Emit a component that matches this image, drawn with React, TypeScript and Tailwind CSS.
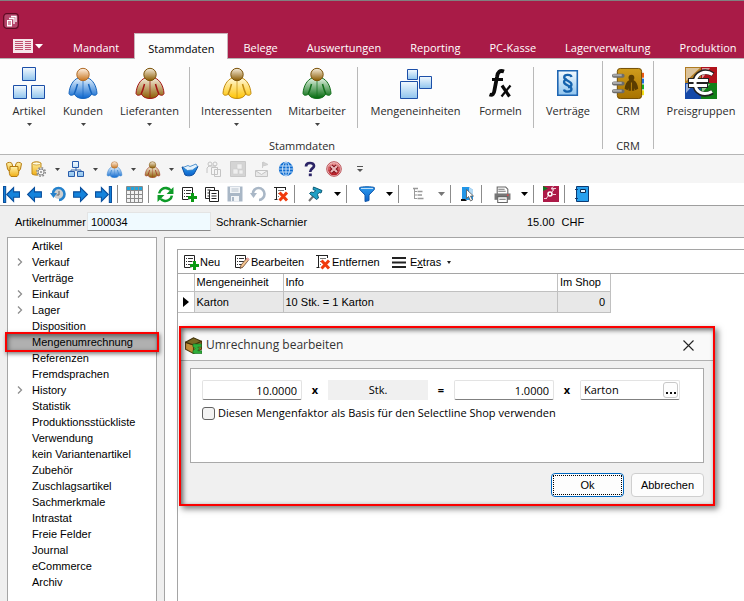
import type { ReactNode } from 'react';

const tabs = ['Mandant', 'Stammdaten', 'Belege', 'Auswertungen', 'Reporting', 'PC-Kasse', 'Lagerverwaltung', 'Produktion'];

const treeItems = [
  { label: 'Artikel' },
  { label: 'Verkauf', children: true },
  { label: 'Verträge' },
  { label: 'Einkauf', children: true },
  { label: 'Lager', children: true },
  { label: 'Disposition' },
  { label: 'Mengenumrechnung', active: true },
  { label: 'Referenzen' },
  { label: 'Fremdsprachen' },
  { label: 'History', children: true },
  { label: 'Statistik' },
  { label: 'Produktionsstückliste' },
  { label: 'Verwendung' },
  { label: 'kein Variantenartikel' },
  { label: 'Zubehör' },
  { label: 'Zuschlagsartikel' },
  { label: 'Sachmerkmale' },
  { label: 'Intrastat' },
  { label: 'Freie Felder' },
  { label: 'Journal' },
  { label: 'eCommerce' },
  { label: 'Archiv' },
];

const segoe = "font-['Open_Sans','Noto_Sans',sans-serif]";
const arial = "font-['Liberation_Sans',Arial,sans-serif]";

/* ---------- Icons ---------- */

function Gradients() {
  const stops = [
    ['g-box', '#f4fafe', '#8fc4ee'],
    ['g-blue', '#e6f3fd', '#0a66cf'],
    ['g-orange', '#fff3e6', '#c8741d'],
    ['g-brown', '#f7eedd', '#8a5a00'],
    ['g-yellow', '#fff8dc', '#ffc400'],
    ['g-green', '#e4f3e4', '#00690a'],
    ['g-gold', '#fff3ae', '#f0ae14'],
    ['g-book', '#cf9c1c', '#a87300'],
    ['g-sky', '#2d9df0', '#0a5fc8'],
    ['g-red', '#f0a0a0', '#b3141e'],
  ];
  return (
    <svg className="absolute h-0 w-0" aria-hidden="true">
      <defs>
        {stops.map(([id, from, to]) => (
          <linearGradient key={id} id={id} x1="0" y1="0" x2="0" y2="1">
            <stop offset="0" stopColor={from} />
            <stop offset="1" stopColor={to} />
          </linearGradient>
        ))}
      </defs>
    </svg>
  );
}

function Svg({ size = 16, box = 16, children }: { size?: number; box?: number; children: ReactNode }) {
  return (
    <svg width={size} height={size} viewBox={`0 0 ${box} ${box}`} fill="none" className="shrink-0" aria-hidden="true">
      {children}
    </svg>
  );
}

function Person({ size = 32, head, body, line, headLine }: { size?: number; head: string; body: string; line: string; headLine: string }) {
  return (
    <Svg size={size} box={32}>
      <path
        d="M11 11C6 13 2.500 19 2 26.500C2.500 28.500 5 29 7.500 27C8.500 30 12 31.500 16 31.500S23.500 30 24.500 27C27 29 29.500 28.500 30 26.500C29.500 19 26 13 21 11Z"
        fill={body}
        stroke={line}
      />
      <path d="M10.500 17C9.500 21 8.500 24 7 27.500M21.500 17C22.500 21 23.500 24 25 27.500" stroke={line} strokeWidth="1.500" />
      <path d="M16 14V31" stroke={line} strokeOpacity=".7" />
      <circle cx="16" cy="7.500" r="6.200" fill={head} stroke={headLine} />
    </Svg>
  );
}

function Boxes({ size = 32 }: { size?: number }) {
  return (
    <Svg size={size} box={32}>
      <g fill="url(#g-box)" stroke="#1c4fa8">
        <path d="M9.500.500h13v13h-13z" />
        <path d="M.500 18.500h13v13H.500z" />
        <path d="M18.500 18.500h13v13h-13z" />
      </g>
    </Svg>
  );
}

function SmallBoxes() {
  return (
    <Svg size={18} box={18}>
      <path d="M9 7v4M4 12v-2h10v2" stroke="#3c6cae" />
      <path d="M5.500 1.500h6v6h-6zM1.500 11.500h6v5h-6zM10.500 11.500h6v5h-6z" fill="url(#g-box)" stroke="#2a5cab" />
    </Svg>
  );
}

function UnitBoxes() {
  return (
    <Svg size={32} box={32}>
      <g fill="url(#g-box)" stroke="#1c4fa8">
        <path d="M7.500 2.500h10v10h-10z" />
        <path d="M19.500 9.500h12v12h-12z" />
        <path d="M.500 14.500h17v17H.500z" />
      </g>
    </Svg>
  );
}

function Formula() {
  return (
    <Svg size={32} box={32}>
      <path d="M19 4.500C15 3 12.500 5 12 10L9.500 23C9 27 7.500 28.500 4.500 27.500" stroke="#0a0a0a" strokeWidth="3.800" />
      <path d="M7 12.500h11" stroke="#0a0a0a" strokeWidth="3" />
      <path d="M17 18.500l7.500 11" stroke="#0a0a0a" strokeWidth="3.200" />
      <path d="M25.500 18.500l-9 11" stroke="#0a0a0a" strokeWidth="2.200" />
    </Svg>
  );
}

function Contract() {
  return (
    <Svg size={32} box={32}>
      <path d="M5.800 3.800h19.500v24.500H5.800z" fill="url(#g-box)" stroke="#1f66b3" strokeWidth="1.600" />
      <path
        d="M19.500 10C19 7.500 12.500 7 12.200 10.200C12 13.500 19.500 14 19.500 17.500C19.500 19 18 20 16 20M12 22.500C12.500 25.500 19.500 25.500 19.500 22C19.500 18.500 12 18.500 12 15C12 13.500 13.500 12.500 15 12.500"
        stroke="#1462ad"
        strokeWidth="2.300"
      />
    </Svg>
  );
}

function AddressBook() {
  return (
    <Svg size={33} box={34}>
      <path d="M29 6h4v5h-4z" fill="#f05a14" />
      <path d="M29 12h4v5h-4z" fill="#1a6fe0" />
      <path d="M29 18h4v5h-4z" fill="#12b020" />
      <path d="M29 24h4v5h-4z" fill="#f7e217" />
      <rect x="5.500" y="1.500" width="25" height="31" rx="3" fill="url(#g-book)" stroke="#6f4a00" />
      <path d="M2 9h9M2 17h9M2 25h9" stroke="#6c6c6c" strokeWidth="4" strokeLinecap="round" />
      <path d="M1 8.500h9M1 16.500h9M1 24.500h9" stroke="#a9a9a9" strokeWidth="2" />
      <circle cx="20" cy="11" r="3" fill="#5b3d00" />
      <path d="M18 13.500C15 15 13.500 18 13 22.500L16 24L17 22V24.500H19.500V16H20.500V24.500H23V22L24 24L27 22.500C26.500 18 25 15 22 13.500Z" fill="#5b3d00" />
    </Svg>
  );
}

function Euro() {
  return (
    <Svg size={32} box={32}>
      <path d="M0 0h16v16H0z" fill="#b07b22" />
      <path d="M16 0h16v16H16z" fill="#b0121b" />
      <path d="M0 16h16v16H0z" fill="#1549a8" />
      <path d="M16 16h16v16H16z" fill="#128018" />
      <path d="M1 1h14L1 14zM17 1h8L17 12zM1 17h8L1 26zM17 17h8L17 26z" fill="#fff" fillOpacity=".55" />
      <path d="M28 7.500C20 2 10 5.500 9.500 16C10 26.500 19 30 27.500 25M3 13.500h21M3 18.500h20" stroke="#222" strokeWidth="5" />
      <path d="M27.500 7.500C20 3 10.500 6 10 16C10.500 26 19 29 27 24.500M4 13.500h19M4 18.500h18" stroke="#fff" strokeWidth="3" />
    </Svg>
  );
}

function AppLogo() {
  return (
    <Svg>
      <rect x=".700" y=".700" width="14.600" height="14.600" rx="3" fill="#b5446a" stroke="#5e0a22" strokeWidth="1.200" />
      <path d="M4 7h5v6.500H4z" fill="#fff" />
      <path d="M5 9h3M5 11h3" stroke="#a91b47" />
      <path d="M6 5.500h5V11M8 3.500h5V9" stroke="#fff" strokeWidth="1.300" />
    </Svg>
  );
}

function FileMenuIcon() {
  return (
    <svg width="30" height="16" viewBox="0 0 30 16" fill="none" aria-hidden="true">
      <path d="M0 1h20v14H0z" fill="#f6e6ea" />
      <path d="M2 3.500h8M2 5.500h8M2 7.500h8M2 9.500h8M2 11.500h8M12 3.500h6M12 5.500h6M12 7.500h6M12 9.500h6M12 11.500h6" stroke="#c0506f" />
      <path d="M22 6h8l-4 4.500z" fill="#fff" />
    </svg>
  );
}

function Caret({ color = '#444' }: { color?: string }) {
  return (
    <svg width="7" height="4" viewBox="0 0 7 4" className="shrink-0" aria-hidden="true">
      <path d="M0 0h7L3.500 4z" fill={color} />
    </svg>
  );
}

function SmallCaret() {
  return (
    <svg width="5" height="3" viewBox="0 0 5 3" className="shrink-0" aria-hidden="true">
      <path d="M0 0h5L2.500 3z" fill="#444" />
    </svg>
  );
}

function Barrels() {
  return (
    <Svg size={18} box={18}>
      <g fill="url(#g-gold)" stroke="#b57b10">
        <path d="M1.500 3.500C3 2 6 2 7 3.500L8 8L6 13.500L2.500 9Z" />
        <path d="M16.500 3.500C15 2 12 2 11 3.500L10 8L12 13.500L15.500 9Z" />
        <path d="M5 6.500h8v3c1.500 2 .500 6-1 7h-6c-1.500-1-2.500-5-1-7z" />
      </g>
    </Svg>
  );
}

function BarrelGear() {
  return (
    <Svg size={18} box={18}>
      <path d="M3 3C5 1.500 10 1.500 12 3V14C10 15.500 5 15.500 3 14Z" fill="url(#g-gold)" stroke="#c08a1a" />
      <ellipse cx="7.500" cy="3.500" rx="4" ry="1.500" fill="#fffbe0" stroke="#c08a1a" strokeWidth=".7" />
      <circle cx="12" cy="12" r="4.200" fill="#f5f5f5" stroke="#8b8b8b" strokeWidth="1.600" strokeDasharray="1.700 1.600" />
      <circle cx="12" cy="12" r="3" fill="#f5f5f5" stroke="#8a8a8a" />
      <circle cx="12" cy="12" r="1" fill="#8a8a8a" />
    </Svg>
  );
}

function Tray() {
  return (
    <Svg size={18} box={18}>
      <path d="M1 7l3 8c3 1.500 7 1 9-1L17 6.500l-4 .500-2.500 2z" fill="url(#g-sky)" stroke="#0d4fa0" />
      <path d="M2 7.500l5-2 2 1 6-2.500 1.500 2.500-5 3.500-5 .500z" fill="#e3f2fd" stroke="#2f7cc4" strokeWidth=".8" />
    </Svg>
  );
}

function GreyCopy() {
  return (
    <Svg>
      <g stroke="#c4c4c4">
        <circle cx="4" cy="3" r="2" />
        <circle cx="9" cy="3" r="2" />
        <path d="M1 12V7l2-2h7" />
        <path d="M5.500 6.500h6v7h-6zM8.500 8.500h6v7h-6z" fill="#f5f5f5" />
      </g>
    </Svg>
  );
}

function GreyBlocks() {
  return (
    <Svg>
      <path d="M.500.500h15v15H.500z" fill="#d4d4d4" stroke="#c8c8c8" />
      <path d="M7 3h5v5H7zM3 8h5v5H3zM9 9h4v4H9z" fill="#efefef" stroke="#ccc" strokeWidth=".6" />
    </Svg>
  );
}

function GreyMail() {
  return (
    <Svg>
      <path d="M1.500 9.500h12v6h-12zM2 10l5.500 3.500L13 10" stroke="#c4c4c4" fill="#e9e9e9" />
      <path d="M8.500 7V1M9 1l5 2.500L9 5z" stroke="#ccc" fill="#d4d4d4" />
    </Svg>
  );
}

function GlobeIcon() {
  return (
    <Svg>
      <circle cx="8" cy="8" r="7.200" fill="#0a6ad0" />
      <g stroke="#d4e8fb" strokeWidth=".9">
        <path d="M1.500 5h13M1 8h14M1.500 11h13M8 1v14" />
        <ellipse cx="8" cy="8" rx="3.500" ry="7" />
      </g>
    </Svg>
  );
}

function HelpIcon() {
  return (
    <Svg>
      <path d="M4 5.500C4 .800 12 1 12 5C12 7.500 8.200 7.500 8.200 11" stroke="#2b2466" strokeWidth="2.700" />
      <path d="M6.800 12.500h3v2.700h-3z" fill="#2b2466" />
    </Svg>
  );
}

function CancelIcon() {
  return (
    <Svg>
      <circle cx="8" cy="8" r="7.300" fill="#f0d6d6" stroke="#bb4f55" />
      <circle cx="8" cy="8" r="6.300" fill="url(#g-red)" />
      <path d="M5 5l6 6M11 5l-6 6" stroke="#7d0a14" strokeWidth="4.200" />
      <path d="M5 5l6 6M11 5l-6 6" stroke="#e9b9bb" strokeWidth="2.200" />
    </Svg>
  );
}

function Overflow() {
  return (
    <Svg size={8} box={8}>
      <path d="M1 1.500h6" stroke="#555" />
      <path d="M1 4h6L4 7z" fill="#555" />
    </Svg>
  );
}

function Arrow({ flip = false, bar = false }: { flip?: boolean; bar?: boolean }) {
  return (
    <Svg size={17} box={16}>
      <g transform={flip ? 'matrix(-1 0 0 1 16 0)' : undefined}>
        <path d={bar ? 'M3.500 8L10 1.500V5.500H15.500V10.500H10V14.500Z' : 'M1.500 8L8 1.500V5.500H14.500V10.500H8V14.500Z'} fill="#1483dc" stroke="#0b4f9c" />
        {bar && <path d="M.500 .500h2v15h-2z" fill="#1483dc" stroke="#0b4f9c" />}
      </g>
    </Svg>
  );
}

function HistoryIcon({ ring, face }: { ring: string; face?: string }) {
  return (
    <Svg>
      {face && <circle cx="8.500" cy="8" r="5" fill={face} />}
      <path d="M3 8.500C2.500 4.500 5.500 2 8.500 2C12 2 14.500 4.800 14.500 8C14.500 11 12 14 9 14" stroke={ring} strokeWidth="2.600" />
      <path d="M0 7h7l-3.500 5z" fill={ring} />
      {face && <path d="M9 5v4H6.500" stroke="#666" />}
    </Svg>
  );
}

function GridIcon() {
  return (
    <Svg size={17} box={17}>
      <path d="M.500.500h16v16H.500z" fill="#f2f2f2" stroke="#8a8a8a" />
      <path d="M1 1h15v3H1z" fill="#22a5dc" />
      <path d="M1 4.500h15M1 8.500h15M1 12.500h15M4.500 1v15M8.500 1v15M12.500 1v15" stroke="#8a8a8a" />
    </Svg>
  );
}

function RefreshIcon() {
  return (
    <Svg size={17}>
      <path d="M2 7C2.500 3.500 6 1.500 9 2C10.500 2.300 12 3 12.500 4M14 9C13.500 12.500 10 14.500 7 14C5.500 13.700 4 13 3.500 12" stroke="#0d9b28" strokeWidth="2.400" />
      <path d="M15.500 1v6.500H9zM.500 15V8.500H7z" fill="#0d9b28" />
    </Svg>
  );
}

function ListBase() {
  return (
    <>
      <path d="M1.500 13.500V1.500h10v8M1.500 13.500h7" stroke="#222" />
      <path d="M3 4.500h1M5 4.500h5M3 7.500h1M5 7.500h5M3 10.500h1M5 10.500h3" stroke="#333" />
    </>
  );
}

function ListAdd() {
  return (
    <Svg>
      <ListBase />
      <path d="M11.500 7v9M7 11.500h9" stroke="#fff" strokeWidth="4" />
      <path d="M11.500 7v9M7 11.500h9" stroke="#0a9a14" strokeWidth="3" />
    </Svg>
  );
}

function ListEdit() {
  return (
    <Svg>
      <ListBase />
      <path d="M6 14.500l1-3.500 6-7 2 1.500-6 7.500z" fill="#f3c48f" stroke="#6d4b35" strokeWidth=".8" />
      <path d="M12 5l1.500-1.500 2 1.500-1.300 1.700z" fill="#e9a0a0" />
    </Svg>
  );
}

function ListRemove() {
  return (
    <Svg>
      <path d="M1 1.500h12M3.500 2v12M1.500 13.500h3M12.500 1v3" stroke="#222" />
      <path d="M5 4.500h6M5 7.500h2M5 10.500h1" stroke="#777" />
      <path d="M6.500 6.500l7.500 8M14 6.500l-7.500 8" stroke="#f03a0c" strokeWidth="3" />
    </Svg>
  );
}

function CopyIcon() {
  return (
    <Svg>
      <path d="M1.500 1.500h9v11h-9zM3.500 4h3M3.500 7h3M3.500 10h3" fill="#fff" stroke="#222" />
      <path d="M5.500 4.500h9v11h-9zM7.500 7.500h5M7.500 10h5M7.500 12.500h5" fill="#fff" stroke="#222" />
    </Svg>
  );
}

function SaveIcon() {
  return (
    <Svg>
      <path d="M.500.500h15v15H.500z" fill="#a9b7c6" />
      <path d="M3 1h10v6H3zM4 10h8v5.500H4z" fill="#f1f4f7" />
      <path d="M4.500 3h7M4.500 5h7" stroke="#b8c2cc" />
      <path d="M5 11h2v4H5z" fill="#a9b7c6" />
    </Svg>
  );
}

function PinIcon() {
  return (
    <Svg>
      <path d="M6.500 10L2 15" stroke="#747474" strokeWidth="2" />
      <path d="M6.500 1L15 4.500 14 7 12 6.500 10.500 8.500 11.500 12 9.500 13.500 2.500 7.500 4 6 7 6.500 8.500 4.500 6 3.500z" fill="#20a0c4" stroke="#0d5c78" />
    </Svg>
  );
}

function FilterIcon() {
  return (
    <Svg>
      <path d="M.700 1.500C3 .500 13 .500 15.300 1.500V3.500L10 9V14.500L6 15.500V9L.700 3.500Z" fill="url(#g-sky)" stroke="#1157a8" />
      <path d="M2 2.500h12" stroke="#bfe0fa" />
    </Svg>
  );
}

function TreeIcon() {
  return (
    <Svg>
      <path d="M3.500 2v11M3.500 5.500H6M3.500 9H6M3.500 12.500H6" stroke="#999" />
      <path d="M2 2.500h5M6.500 5.500h5M6.500 9h4.500M6.500 12.500h6" stroke="#999" strokeWidth="1.500" />
    </Svg>
  );
}

function SelectIcon() {
  return (
    <Svg>
      <path d="M2 1h7l4 3v10H2z" fill="#2196e8" />
      <path d="M9 1l4 3v6H9z" fill="#b3d9f4" />
      <path d="M1 13h4l2 2H1z" fill="#111" />
      <path d="M6.500 3.500v9l2-2 2 4.500 2-1-2-4h3z" fill="#fff" stroke="#555" strokeWidth=".8" />
    </Svg>
  );
}

function PrinterIcon() {
  return (
    <Svg size={17}>
      <path d="M3 1h8l2 2v5H3z" fill="#fff" stroke="#666" />
      <path d="M4 3h6M4 5h7" stroke="#777" />
      <path d="M.500 7h15v6H.500z" fill="#777" />
      <path d="M3.500 10h9v5.500h-9z" fill="#fff" stroke="#666" />
      <path d="M5 12.500h6" stroke="#777" />
      <circle cx="13" cy="8.500" r=".8" fill="#f04040" />
    </Svg>
  );
}

function ModuleIcon() {
  return (
    <Svg>
      <path d="M0 0h16v16H0z" fill="#ad1a48" />
      <path d="M0 0l5 2.500L0 5z" fill="#0e7a20" />
      <circle cx="7" cy="8" r="2" fill="#ad1a48" stroke="#fff" strokeWidth="1.600" />
      <path d="M9 6l2-3M8 2.500h5M10.500.500L8 2.500l2.500 2M5 10l-2 3M1 12.500h3M10 8.500h3" stroke="#f0c9d5" />
    </Svg>
  );
}

function NotebookIcon() {
  return (
    <Svg>
      <path d="M2.500.500h12v15h-12z" fill="#27a0ee" stroke="#0c3b74" />
      <path d="M6.500 3.500h5v3h-5z" fill="#e6f4fd" stroke="#0c2e57" />
      <path d="M1 3.500h3M1 12.500h3" stroke="#0c3b74" />
    </Svg>
  );
}

function PackageIcon() {
  return (
    <Svg size={17}>
      <path d="M.500 5L8 7.500V15.500L.500 11.500z" fill="#c49038" stroke="#543a0e" />
      <path d="M8 7.500L15.500 4V11.500L8 15.500z" fill="#a3762a" stroke="#543a0e" />
      <path d="M.500 5L8 .800L15.500 4L8 7.500z" fill="#7a6a24" stroke="#3f3009" />
      <path d="M7.500 6.500h8v3h-3.500l1.500 1.500-1.500 2h4v2.500H7.500V13l2-2-2-2z" fill="#2fae3a" stroke="#166b1e" strokeWidth=".6" />
    </Svg>
  );
}

/* ---------- Ribbon ---------- */

function RibbonButton({ icon, label, width, menu = false }: { icon: ReactNode; label: string; width: string; menu?: boolean }) {
  return (
    <button type="button" className={`${width} flex shrink-0 flex-col items-center text-[11px] leading-4 text-[#2b2b2b]`}>
      <span className="flex h-9 items-center justify-center">{icon}</span>
      <span className="mt-[2px] whitespace-nowrap">{label}</span>
      {menu && <span className="mt-1"><SmallCaret /></span>}
    </button>
  );
}

function RibbonDivider({ tall = false }: { tall?: boolean }) {
  return <div className={tall ? '-mt-1 h-[88px] w-px shrink-0 bg-[#b9b9b9]' : 'mt-[2px] h-[61px] w-px shrink-0 bg-[#b9b9b9]'} />;
}

function Ribbon() {
  return (
    <div className="flex h-[96px] overflow-hidden border-b border-[#b5b5b5] bg-[#fdfdfd] pt-[6px] pl-[2px]">
      <div className="flex w-[600px] shrink-0 flex-col">
        <div className="flex h-[71px]">
          <RibbonButton width="w-[54px]" icon={<Boxes />} label="Artikel" menu />
          <RibbonButton width="w-[54px]" icon={<Person head="url(#g-orange)" headLine="#b06a26" body="url(#g-blue)" line="#1765bd" />} label="Kunden" menu />
          <RibbonButton width="w-[79px]" icon={<Person head="url(#g-brown)" headLine="#7a5208" body="url(#g-brown)" line="#a31515" />} label="Lieferanten" menu />
          <RibbonDivider />
          <RibbonButton width="w-[93px]" icon={<Person head="url(#g-brown)" headLine="#7a5208" body="url(#g-yellow)" line="#c28c10" />} label="Interessenten" menu />
          <RibbonButton width="w-[68px]" icon={<Person head="url(#g-brown)" headLine="#7a5208" body="url(#g-green)" line="#13701c" />} label="Mitarbeiter" menu />
          <div className="w-[6px]" />
          <RibbonDivider />
          <RibbonButton width="w-[116px]" icon={<UnitBoxes />} label="Mengeneinheiten" />
          <RibbonButton width="w-[54px]" icon={<Formula />} label="Formeln" />
          <div className="w-[6px]" />
          <RibbonDivider />
          <RibbonButton width="w-[68px]" icon={<Contract />} label="Verträge" />
        </div>
        <div className="mt-[2px] text-center text-[11px] leading-4 text-[#2b2b2b]">Stammdaten</div>
      </div>
      <RibbonDivider tall />
      <div className="flex w-[50px] shrink-0 flex-col items-center">
        <div className="h-[71px]">
          <RibbonButton width="w-[50px]" icon={<AddressBook />} label="CRM" />
        </div>
        <div className="mt-[2px] text-[11px] leading-4 text-[#2b2b2b]">CRM</div>
      </div>
      <RibbonDivider tall />
      <div className="shrink-0">
        <RibbonButton width="w-[94px]" icon={<Euro />} label="Preisgruppen" />
      </div>
    </div>
  );
}

/* ---------- Toolbars ---------- */

function Tool({ label, children }: { label: string; children: ReactNode }) {
  return (
    <button type="button" aria-label={label} className="flex w-[23px] shrink-0 items-center justify-center">
      {children}
    </button>
  );
}

function WideTool({ label, color = '#000', children }: { label: string; color?: string; children: ReactNode }) {
  return (
    <button type="button" aria-label={label} className="flex w-11 shrink-0 items-center">
      <span className="flex w-[30px] justify-center">{children}</span>
      <span className="flex w-[14px] justify-center"><Caret color={color} /></span>
    </button>
  );
}

function ToolDivider() {
  return <div className="my-[2px] mr-[5px] ml-[2px] w-px shrink-0 bg-[#8c8c8c]" />;
}

const quickTools: { label: string; icon: ReactNode; menu?: boolean }[] = [
  { label: 'Lager', icon: <Barrels /> },
  { label: 'Datenbank', icon: <BarrelGear />, menu: true },
  { label: 'Artikel', icon: <SmallBoxes />, menu: true },
  { label: 'Kunden', icon: <Person size={17} head="url(#g-orange)" headLine="#b06a26" body="url(#g-blue)" line="#3a86d0" />, menu: true },
  { label: 'Lieferanten', icon: <Person size={17} head="url(#g-brown)" headLine="#7a5208" body="url(#g-brown)" line="#a33020" />, menu: true },
  { label: 'Ablage', icon: <Tray /> },
  { label: 'Kopieren', icon: <GreyCopy /> },
  { label: 'Bausteine', icon: <GreyBlocks /> },
  { label: 'Post', icon: <GreyMail /> },
  { label: 'Internet', icon: <GlobeIcon /> },
  { label: 'Hilfe', icon: <HelpIcon /> },
  { label: 'Beenden', icon: <CancelIcon /> },
];

function QuickToolbar() {
  return (
    <div className="flex h-7 items-center bg-[#f5f5f5] pl-[2px]">
      {quickTools.map((tool) => (
        <div key={tool.label} className="flex shrink-0 items-center">
          <button type="button" aria-label={tool.label} className="flex w-6 justify-center">{tool.icon}</button>
          {tool.menu && <span className="flex w-[14px] justify-center"><SmallCaret /></span>}
        </div>
      ))}
      <span className="ml-[10px]"><Overflow /></span>
    </div>
  );
}

function RecordToolbar() {
  return (
    <div className="flex h-[23px] border-b border-[#9e9e9e] bg-white">
      <Tool label="Erster"><Arrow bar /></Tool>
      <Tool label="Zurück"><Arrow /></Tool>
      <Tool label="Verlauf"><HistoryIcon ring="#2481cc" face="#cfcfcf" /></Tool>
      <Tool label="Weiter"><Arrow flip /></Tool>
      <Tool label="Letzter"><Arrow flip bar /></Tool>
      <ToolDivider />
      <Tool label="Tabelle"><GridIcon /></Tool>
      <ToolDivider />
      <Tool label="Aktualisieren"><RefreshIcon /></Tool>
      <Tool label="Neu"><ListAdd /></Tool>
      <Tool label="Kopieren"><CopyIcon /></Tool>
      <Tool label="Speichern"><SaveIcon /></Tool>
      <Tool label="Rückgängig"><HistoryIcon ring="#a9b7c6" /></Tool>
      <Tool label="Löschen"><ListRemove /></Tool>
      <ToolDivider />
      <WideTool label="Anheften"><PinIcon /></WideTool>
      <ToolDivider />
      <WideTool label="Filter"><FilterIcon /></WideTool>
      <ToolDivider />
      <WideTool label="Struktur" color="#777"><TreeIcon /></WideTool>
      <ToolDivider />
      <Tool label="Auswahl"><SelectIcon /></Tool>
      <ToolDivider />
      <WideTool label="Drucken"><PrinterIcon /></WideTool>
      <ToolDivider />
      <Tool label="Module"><ModuleIcon /></Tool>
      <ToolDivider />
      <Tool label="Journal"><NotebookIcon /></Tool>
    </div>
  );
}

/* ---------- Content ---------- */

function Sidebar() {
  return (
    <nav className="w-[150px] shrink-0 border border-b-0 border-[#a5a5a5] bg-white">
      <ul className="text-[11px] leading-4 text-black">
        {treeItems.map((item) => (
          <li key={item.label} className={item.active ? 'relative h-4 bg-[#b0b0b0] pl-6' : 'relative h-4 pl-6'}>
            {item.children && (
              <svg width="6" height="8" viewBox="0 0 6 8" fill="none" className="absolute top-1 left-[9px]" aria-hidden="true">
                <path d="M1 .500L4.500 4L1 7.500" stroke="#8e8e8e" strokeWidth="1.300" />
              </svg>
            )}
            {item.label}
            {item.active && (
              <span className="absolute -inset-x-[3px] -inset-y-[2px] border-2 border-[#fb0000] shadow-[1px_2px_4px_rgba(0,0,0,0.5),inset_1px_2px_5px_rgba(0,0,0,0.5)]" />
            )}
          </li>
        ))}
      </ul>
    </nav>
  );
}

function UnitTable() {
  return (
    <table className="w-[433px] table-fixed border-collapse text-[11px] leading-4">
      <colgroup>
        <col className="w-4" />
        <col className="w-[89px]" />
        <col />
        <col className="w-[53px]" />
      </colgroup>
      <thead>
        <tr className="h-[17px] text-left">
          <th className="border-r border-b border-[#c0c0c0]" />
          <th className="border-r border-b border-[#c0c0c0] px-[2px] font-normal">Mengeneinheit</th>
          <th className="border-r border-b border-[#c0c0c0] px-[2px] font-normal">Info</th>
          <th className="border-r border-b border-[#c0c0c0] px-[2px] font-normal">Im Shop</th>
        </tr>
      </thead>
      <tbody>
        <tr className="h-[21px] bg-[#e8e8e8]">
          <td className="border-r border-b border-[#c0c0c0] bg-white pl-[5px]">
            <svg width="7" height="10" viewBox="0 0 7 10" aria-hidden="true"><path d="M0 0L6 5L0 10z" fill="#000" /></svg>
          </td>
          <td className="border-r border-b border-[#c0c0c0] px-[2px]">Karton</td>
          <td className="border-r border-b border-[#c0c0c0] px-[2px]">10 Stk. = 1 Karton</td>
          <td className="border-r border-b border-[#c0c0c0] px-[5px] text-right">0</td>
        </tr>
      </tbody>
    </table>
  );
}

const fieldClass = 'h-5 w-[100px] rounded-[2px] border border-[#e3e3e3] border-b-[#808080] bg-white text-[11px] leading-4';

function ConversionDialog() {
  return (
    <div
      role="dialog"
      aria-label="Umrechnung bearbeiten"
      className={`absolute top-[88px] right-[29px] left-[14px] border-2 border-[#fb0000] bg-[#f0f0f0] text-black shadow-[3px_3px_6px_rgba(0,0,0,0.5)] ${segoe}`}
    >
      <div className="flex h-[33px] items-center border-b border-[#b0b0b0] bg-[#f9f9f9] pt-[2px] pl-1">
        <PackageIcon />
        <h2 className="ml-1 text-[12px] leading-4 text-[#333]">Umrechnung bearbeiten</h2>
        <button type="button" aria-label="Schliessen" className="mr-[19px] ml-auto">
          <svg width="11" height="11" viewBox="0 0 11 11" fill="none" aria-hidden="true">
            <path d="M.500.500l10 10M10.500.500l-10 10" stroke="#222" strokeWidth="1.100" />
          </svg>
        </button>
      </div>
      <div className="mx-[9px] mt-[7px] h-[95px] border border-[#a9a9a9] bg-white px-[11px] pt-[11px] text-[11px]">
        <div className="flex items-center">
          <input aria-label="Menge" defaultValue="10.0000" className={`${fieldClass} pr-1 text-right`} />
          <span className="w-[26px] text-center font-bold">x</span>
          <output className="h-5 w-[100px] bg-[#f0f0f0] text-center leading-5">Stk.</output>
          <span className="w-[26px] text-center font-bold">=</span>
          <input aria-label="Faktor" defaultValue="1.0000" className={`${fieldClass} pr-1 text-right`} />
          <span className="w-[26px] text-center font-bold">x</span>
          <div className={`${fieldClass} flex items-center`}>
            <input aria-label="Einheit" defaultValue="Karton" className="min-w-0 flex-1 bg-transparent pl-[3px] outline-none" />
            <button type="button" aria-label="Einheit wählen" className="mr-px flex h-4 w-[15px] items-end justify-center rounded-[3px] border border-[#c8c8c8] bg-[#fdfdfd] pb-[3px]">
              <svg width="10" height="2" viewBox="0 0 10 2" aria-hidden="true"><path d="M0 0h2v2H0zM4 0h2v2H4zM8 0h2v2H8z" fill="#111" /></svg>
            </button>
          </div>
        </div>
        <label className="mt-[5px] flex items-center gap-[3px] leading-4 whitespace-nowrap">
          <input type="checkbox" className="h-[13px] w-[13px] appearance-none rounded-[3px] border border-[#626262] bg-[#f3f3f3]" />
          Diesen Mengenfaktor als Basis für den Selectline Shop verwenden
        </label>
      </div>
      <div className={`mx-[9px] mt-[10px] mb-[7px] flex justify-end gap-[7px] text-[11px] leading-4 ${arial}`}>
        <button type="button" className="h-6 w-[73px] rounded-[4px] border border-[#0067c0] bg-[#fdfdfd] p-px">
          <span className="flex h-full items-center justify-center border border-dotted border-black">Ok</span>
        </button>
        <button type="button" className="h-6 w-[73px] rounded-[4px] border border-[#cfcfcf] bg-[#fdfdfd]">Abbrechen</button>
      </div>
      <div className="pointer-events-none absolute inset-0 shadow-[inset_2px_2px_5px_rgba(0,0,0,0.6)]" />
    </div>
  );
}

export default function App() {
  return (
    <div className={`flex min-h-screen flex-col overflow-hidden bg-[#efefef] ${arial}`}>
      <Gradients />
      <header className={`border-t border-[#808080] bg-[#a91b47] text-white ${segoe}`}>
        <div className="flex h-8 items-end pb-[4px] pl-[3px]">
          <AppLogo />
        </div>
        <div className="flex h-[26px] items-stretch gap-px border-b border-[#b5b5b5]">
          <button type="button" aria-label="Datei" className="flex w-[58px] shrink-0 items-center pl-[13px]">
            <FileMenuIcon />
          </button>
          {tabs.map((tab) => (
            <button
              key={tab}
              type="button"
              className={
                tab === 'Stammdaten'
                  ? '-mb-px shrink-0 border border-b-0 border-[#c9b3ba] bg-[#fdfdfd] px-[13px] pt-1 text-[11px] leading-4 text-black'
                  : 'shrink-0 px-[14px] pt-1 text-[11px] leading-4'
              }
            >
              {tab}
            </button>
          ))}
        </div>
      </header>
      <div className={segoe}>
        <Ribbon />
      </div>
      <QuickToolbar />
      <RecordToolbar />
      <div className="flex h-[31px] items-center text-[11px] leading-4 text-black">
        <label htmlFor="artikelnummer" className="w-[87px] pl-[15px]">Artikelnummer</label>
        <input id="artikelnummer" defaultValue="100034" className="h-[19px] w-[124px] border border-[#e4e4e4] border-b-[#8a8a8a] bg-[#f0faff] px-[3px]" />
        <span className="ml-[5px] w-[311px]">Schrank-Scharnier</span>
        <span>15.00</span>
        <span className="ml-[7px]">CHF</span>
      </div>
      <main className="flex flex-1 gap-[7px] pl-[7px]">
        <Sidebar />
        <section className="relative flex min-w-0 flex-1 flex-col border-t border-l border-[#a5a5a5] bg-white pt-[11px] pl-3">
          <div className="flex-1 border-t border-l border-[#a5a5a5]">
            <div className="flex h-6 items-center border-b border-[#a5a5a5] pt-px pl-[5px] text-[11px] leading-4">
              <button type="button" className="flex w-[51px] items-center gap-px"><ListAdd />Neu</button>
              <button type="button" className="flex w-[81px] items-center gap-px"><ListEdit />Bearbeiten</button>
              <button type="button" className="flex w-[77px] items-center gap-px"><ListRemove />Entfernen</button>
              <button type="button" className="flex items-center">
                <svg width="14" height="11" viewBox="0 0 14 11" aria-hidden="true"><path d="M0 0h14v2H0zM0 4.500h14v2H0zM0 9h14v2H0z" fill="#222" /></svg>
                <span className="ml-1">E<u>x</u>tras</span>
                <svg width="4" height="3" viewBox="0 0 4 3" className="ml-[6px]" aria-hidden="true"><path d="M0 0h4L2 3z" fill="#222" /></svg>
              </button>
            </div>
            <UnitTable />
          </div>
          <ConversionDialog />
        </section>
      </main>
    </div>
  );
}
